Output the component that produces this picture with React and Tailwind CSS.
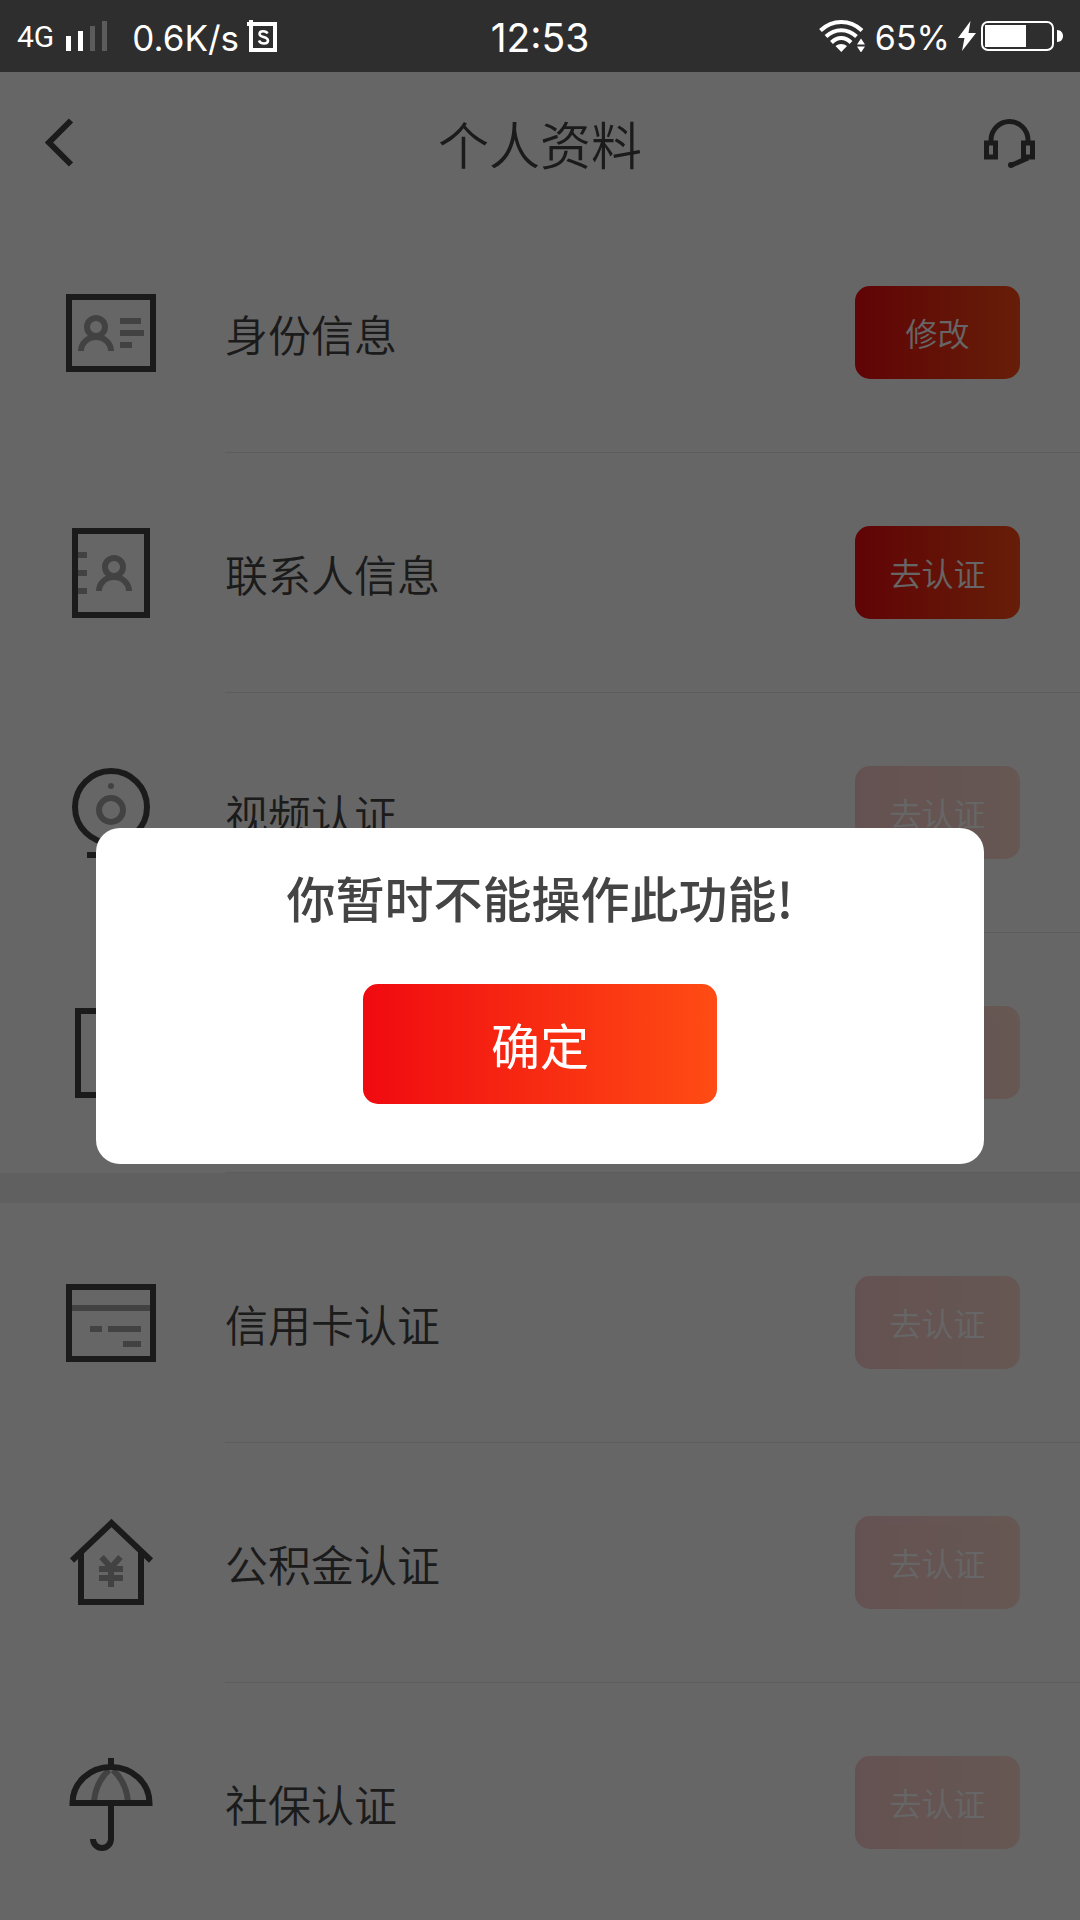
import { useState } from "react";

// dark outline / light detail colours shared by the list icons
const DARK = "#444444";
const LIGHT = "#a6a6a6";

const IdCardIcon = () => (
  <>
    <rect x="3" y="9" width="84" height="72" stroke={DARK} />
    <circle cx="30" cy="39" r="9" stroke={LIGHT} />
    <path d="M15 63a15 14 0 0 1 30 0" stroke={LIGHT} />
    <path d="M54 33h21M54 45h24M54 57h12" stroke={LIGHT} />
  </>
);

const ContactIcon = () => (
  <>
    <path d="M12 27h9M12 45h9M12 63h9" stroke={LIGHT} />
    <rect x="9" y="3" width="72" height="84" stroke={DARK} />
    <circle cx="48" cy="39" r="9" stroke={LIGHT} />
    <path d="M33 63a15 14 0 0 1 30 0" stroke={LIGHT} />
  </>
);

const VideoIcon = () => (
  <>
    <circle cx="45" cy="39" r="36" stroke={DARK} />
    <circle cx="45" cy="18" r="3" fill={LIGHT} stroke="none" />
    <circle cx="45" cy="42" r="12" stroke={LIGHT} />
    <path d="M21 87h48" stroke={DARK} />
  </>
);

const PhoneIcon = () => (
  <>
    <rect x="12" y="3" width="66" height="84" stroke={DARK} />
    <path d="M36 72h18" stroke={LIGHT} />
  </>
);

const CreditCardIcon = () => (
  <>
    <path d="M6 30h78M24 51h12M42 51h33M57 66h18" stroke={LIGHT} />
    <rect x="3" y="9" width="84" height="72" stroke={DARK} />
  </>
);

const HouseIcon = () => (
  <>
    <path d="M6 42.500L45.500 5L85 42.500" stroke={DARK} />
    <path d="M15 33v51h60V33" stroke={DARK} />
    <path d="M35.500 39L45 49.500L54.500 39M33 51h24M33 60h24M45 49v20" stroke={LIGHT} />
  </>
);

const UmbrellaIcon = () => (
  <>
    <path d="M43 12Q30 24 28 43M47 12Q60 24 62 43" stroke={LIGHT} />
    <path d="M6.500 45a38.500 36 0 0 1 77 0z" stroke={DARK} />
    <path d="M45 0v10M45 45v36a9 9 0 0 1-18 0" stroke={DARK} />
  </>
);

const basicItems = [
  { id: 1, name: "身份信息", action: "修改", enabled: true, Icon: IdCardIcon },
  { id: 2, name: "联系人信息", action: "去认证", enabled: true, Icon: ContactIcon },
  { id: 3, name: "视频认证", action: "去认证", enabled: false, Icon: VideoIcon },
  { id: 4, name: "手机认证", action: "去认证", enabled: false, Icon: PhoneIcon },
];

const extraItems = [
  { id: 5, name: "信用卡认证", action: "去认证", enabled: false, Icon: CreditCardIcon },
  { id: 6, name: "公积金认证", action: "去认证", enabled: false, Icon: HouseIcon },
  { id: 7, name: "社保认证", action: "去认证", enabled: false, Icon: UmbrellaIcon },
];

const StatusBar = () => (
  <div className="h-[72px] shrink-0 bg-[#2e2e2e] text-white grid grid-cols-[1fr_auto_1fr] items-center px-[17px] font-[Inter,'Noto_Sans_CJK_SC',sans-serif]">
    <div className="flex items-center">
      <span className="text-[30px] font-[Roboto,sans-serif]">4G</span>
      <svg width="42" height="30" viewBox="0 0 42 30" className="ml-3" fill="white">
        <rect x="0" y="15" width="5" height="15" />
        <rect x="12" y="10" width="5" height="20" />
        <rect x="24" y="5" width="5" height="25" fill="#5c5c5c" />
        <rect x="36" y="0" width="5" height="30" fill="#5c5c5c" />
      </svg>
      <span className="ml-6 pt-1 text-[35px] leading-[40px] whitespace-nowrap">0.6K/s</span>
      <svg width="30" height="32" viewBox="0 0 30 32" className="ml-2" fill="none" stroke="white">
        <path d="M0 4h4M4 0v4" strokeWidth="4" />
        <rect x="4" y="4" width="24" height="26" strokeWidth="4" />
        <path d="M20.500 13.500C19 10.500 12.500 10.500 12.500 14C12.500 18 21 16 21 20.500C21 24.500 13.500 24.500 12 20.500" strokeWidth="2.500" />
      </svg>
    </div>

    <span className="pt-1 text-[39px] leading-[40px]">12:53</span>

    <div className="flex items-center justify-end">
      {/* wifi */}
      <svg width="46" height="32" viewBox="0 0 46 32" fill="none" stroke="white" strokeWidth="4">
        <path d="M1.500 10.500C13.500-.8 31-.8 43 10.500" />
        <path d="M7 16.500C16 8 28.500 8 37.500 16.500" />
        <path d="M12.500 22.500C18.500 16.500 26 16.500 32 22.500" />
        <path d="M16.500 26C20 23.200 24.500 23.200 28 26L22.300 32z" fill="white" stroke="none" />
        <path d="M38 24.500L42 18.500L46 24.500zM38 26.500L42 32.500L46 26.500z" fill="white" stroke="none" />
      </svg>
      <span className="ml-[10px] pt-1 text-[34px] leading-[40px]">65%</span>
      {/* charging */}
      <svg width="18" height="30" viewBox="0 0 18 30" className="ml-2" fill="white">
        <path d="M12.500 0L0 17H6.500L4 30L18 12H10.500z" />
      </svg>
      <svg width="82" height="30" viewBox="0 0 82 30" className="ml-[5px]" fill="white">
        <rect x="1" y="1" width="71" height="28" rx="6" fill="none" stroke="white" strokeWidth="2" />
        <rect x="4" y="4" width="41" height="22" />
        <path d="M76 9C80 9 82 12 82 15S80 21 76 21z" />
      </svg>
    </div>
  </div>
);

const ItemRow = ({ item }) => (
  <li className="h-[240px] flex items-center gap-[69px] pl-[66px]">
    <svg width="90" height="90" viewBox="0 0 90 90" fill="none" strokeWidth="6" className="shrink-0 overflow-visible">
      <item.Icon />
    </svg>
    <div className="flex-1 h-full flex items-center justify-between pr-[60px] border-b border-[#e8e8e8]">
      <span className="pt-px text-[43px] font-[350]">{item.name}</span>
      <button
        disabled={!item.enabled}
        className="w-[165px] h-[93px] pb-px rounded-[15px] text-[32px] font-[350] text-white bg-linear-to-r/srgb from-[#f00a10] to-[#ff4c14] disabled:opacity-20"
      >
        {item.action}
      </button>
    </div>
  </li>
);

const App = () => {
  const [showTip, setShowTip] = useState(true);

  return (
    <div className="h-screen flex flex-col overflow-hidden bg-white text-[#444444] font-['Noto_Sans_CJK_SC',sans-serif]">
      <StatusBar />

      <div className="relative flex-1 overflow-hidden">
        {/* Header */}
        <header className="h-[141px] flex items-center justify-between px-[45px]">
          <button aria-label="返回" className="w-[51px]">
            <svg width="30" height="50" viewBox="0 0 30 50" fill="none" stroke={DARK} strokeWidth="6">
              <path d="M26 2.500L4 24.500L26 46.500" />
            </svg>
          </button>
          <h1 className="pt-px text-[51px] font-[350]">个人资料</h1>
          <button aria-label="客服">
            <svg width="51" height="50" viewBox="0 0 51 50" fill="none" stroke={DARK} strokeWidth="5">
              <path d="M7 23V22a18.500 18.500 0 0 1 37 0V23" />
              <rect x="2.500" y="25" width="9" height="14" />
              <rect x="39.500" y="25" width="9" height="14" />
              <path d="M44 40L28 47" />
              <circle cx="27" cy="47" r="3" fill={DARK} stroke="none" />
            </svg>
          </button>
        </header>

        {/* List */}
        <ul>
          {basicItems.map((item) => (
            <ItemRow key={item.id} item={item} />
          ))}
        </ul>
        <div className="h-[30px] bg-[#f0f0f0]" />
        <ul>
          {extraItems.map((item) => (
            <ItemRow key={item.id} item={item} />
          ))}
        </ul>

        {/* Tip dialog */}
        {showTip && (
          <div className="absolute inset-0 bg-black/60 flex items-center justify-center px-24">
            <div role="dialog" aria-modal="true" className="w-full bg-white rounded-3xl flex flex-col items-center pt-9 pb-[60px]">
              <p className="text-[49px] leading-[66px] font-medium">你暂时不能操作此功能!</p>
              <button
                onClick={() => setShowTip(false)}
                className="mt-[54px] w-[354px] h-[120px] rounded-[15px] text-[49px] text-white bg-linear-to-r/srgb from-[#f00a10] to-[#ff4c14]"
              >
                确定
              </button>
            </div>
          </div>
        )}
      </div>
    </div>
  );
};

export default App;
